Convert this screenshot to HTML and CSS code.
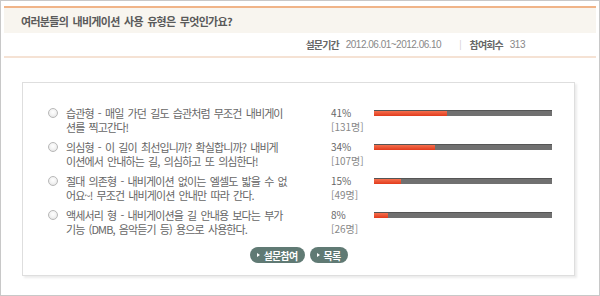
FILE: index.html
```html
<!DOCTYPE html>
<html lang="ko">
<head>
<meta charset="utf-8">
<link rel="stylesheet" href="styles.css">
</head>
<body>
<div class="frame">
  <div class="header"><h1 class="title">여러분들의 내비게이션 사용 유형은 무엇인가요?</h1></div>
  <div class="meta">
    <span class="label">설문기간</span><span class="value">2012.06.01~2012.06.10</span>
    <span class="sep">|</span>
    <span class="label">참여회수</span><span class="value">313</span>
  </div>
  <div class="box">
    <ul class="options">
      <li class="opt">
        <span class="radio"></span>
        <span class="text">습관형 - 매일 가던 길도 습관처럼 무조건 내비게이<br>션를 찍고간다!</span>
        <span class="stat"><span class="pct">41%</span><span class="cnt">[131명]</span></span>
        <span class="bar"><span class="fill" style="width:41%"></span></span>
      </li>
      <li class="opt">
        <span class="radio"></span>
        <span class="text">의심형 - 이 길이 최선입니까? 확실합니까? 내비게<br>이션에서 안내하는 길, 의심하고 또 의심한다!</span>
        <span class="stat"><span class="pct">34%</span><span class="cnt">[107명]</span></span>
        <span class="bar"><span class="fill" style="width:34%"></span></span>
      </li>
      <li class="opt">
        <span class="radio"></span>
        <span class="text">절대 의존형 - 내비게이션 없이는 엘셀도 밟을 수 없<br>어요~! 무조건 내비게이션 안내만 따라 간다.</span>
        <span class="stat"><span class="pct">15%</span><span class="cnt">[49명]</span></span>
        <span class="bar"><span class="fill" style="width:15%"></span></span>
      </li>
      <li class="opt">
        <span class="radio"></span>
        <span class="text">액세서리 형 - 내비게이션을 길 안내용 보다는 부가<br>기능 (DMB, 음악듣기 등) 용으로 사용한다.</span>
        <span class="stat"><span class="pct">8%</span><span class="cnt">[26명]</span></span>
        <span class="bar"><span class="fill" style="width:8%"></span></span>
      </li>
    </ul>
    <div class="buttons">
      <a class="btn">설문참여</a>
      <a class="btn">목록</a>
    </div>
  </div>
</div>
</body>
</html>
```

FILE: styles.css
```css
html, body { margin: 0; padding: 0; background: #fff; }
body { font-family: "Noto Sans CJK KR", "Noto Sans", sans-serif; color: #666; }
.frame {
  width: 600px; height: 296px; box-sizing: border-box;
  border: 1px solid #c8c8c8;
  padding: 5px 3px 0 3px;
}
.header {
  border-top: 2px solid #f0b488;
  background: #f8f5ef;
  height: 25px;
  display: flex; align-items: center;
  padding-left: 17px;
}
.title { margin: 0; font-size: 11px; font-weight: bold; color: #5a5a5a; letter-spacing: -0.7px; word-spacing: 2px; }
.meta {
  height: 25px; box-sizing: border-box;
  border-bottom: 2px solid #f5e2d4;
  display: flex; align-items: center; justify-content: flex-end;
  padding-right: 71px;
  font-size: 10px; color: #777;
}
.meta .label { font-weight: bold; color: #666; letter-spacing: -0.9px; margin-right: 7px; }
.meta .value { font-family: "Liberation Sans", sans-serif; color: #888; letter-spacing: -0.5px; }
.meta .sep { color: #ccc; margin: 0 8px 0 18px; font-size: 9px; }
.box {
  margin: 24px 21px 0 18px;
  height: 194px; box-sizing: border-box;
  border: 1px solid #dedede;
  box-shadow: 2px 2px 2px #ececec;
  padding: 23px 0 0 25px;
  display: flex; flex-direction: column;
}
.options { list-style: none; margin: 0; padding: 0; }
.opt { display: flex; align-items: flex-start; height: 34px; }
.radio {
  width: 10px; height: 10px; border-radius: 50%; box-sizing: border-box;
  border: 1px solid #b8b8b8;
  background: radial-gradient(circle at 50% 40%, #fff 0, #f2f2f2 50%, #dcdcdc 100%);
  margin-top: 2px; margin-right: 8px; flex: none;
}
.text { width: 265px; white-space: nowrap; font-size: 11px; line-height: 14px; color: #666; letter-spacing: -0.9px; word-spacing: 2px; }
.stat { display: flex; flex-direction: column; width: 43px; font-size: 10px; line-height: 14px; }
.pct { color: #666; }
.cnt { color: #888; }
.bar {
  width: 178px; height: 6px; margin-top: 4px;
  background: #707070; border-top: 1px solid #555; box-sizing: border-box;
}
.fill { display: block; height: 100%; background: linear-gradient(#f5704e, #e23a1c); }
.buttons { display: flex; justify-content: center; gap: 5px; margin-top: 5px; padding-right: 25px; }
.btn {
  display: inline-flex; align-items: center; height: 16px; box-sizing: border-box;
  padding: 0 7px 0 7px; border-radius: 8px;
  background: #607a74; color: #fff; font-size: 10px; font-weight: bold; letter-spacing: -0.7px;
}
.btn::before {
  content: ""; width: 0; height: 0; margin-right: 4px;
  border-left: 3px solid #fff; border-top: 2px solid transparent; border-bottom: 2px solid transparent;
}
```
